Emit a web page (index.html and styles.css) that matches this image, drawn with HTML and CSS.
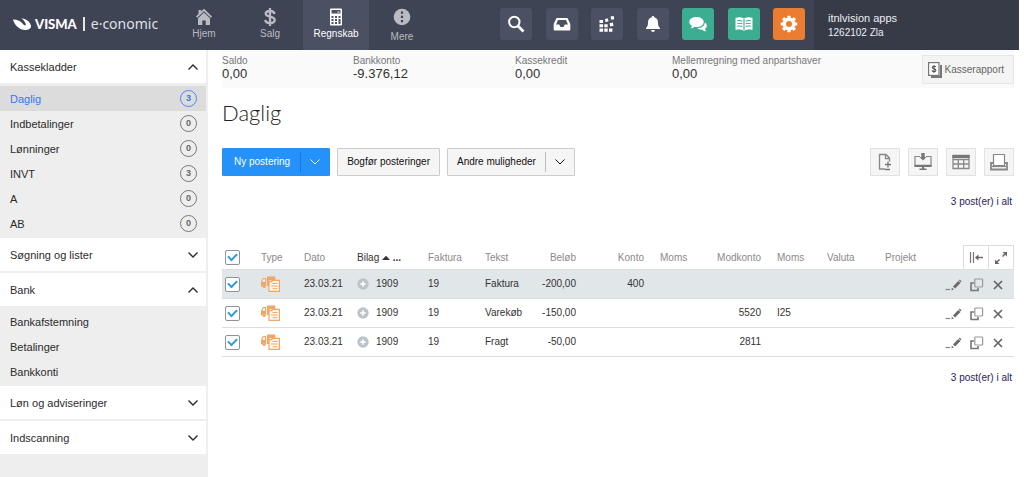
FILE: index.html
```html
<!DOCTYPE html>
<html lang="da">
<head>
<meta charset="utf-8">
<title>Daglig | e·conomic</title>
<link rel="stylesheet" href="styles.css">
</head>
<body>
<svg class="defs" aria-hidden="true">
  <symbol id="chev-down" viewBox="0 0 12 12"><path d="M1.500 3.500 6 8l4.500-4.500" fill="none" stroke="currentColor" stroke-width="1.400"/></symbol>
  <symbol id="chev-up" viewBox="0 0 12 12"><path d="M1.500 8.500 6 4l4.500 4.500" fill="none" stroke="currentColor" stroke-width="1.400"/></symbol>
  <symbol id="truck" viewBox="0 0 20 16">
    <path d="M6 .5h8.300V4H8.500v6H6z M0 6l1.800-4H5.200v8.500H4.800a1.800 1.800 0 0 0-3.400 0H0z" fill="#f0a668"/>
    <path d="M1.300 5.700 2.500 3.200h1.500v2.500z" fill="#fff"/>
    <circle cx="3.100" cy="10.600" r="1.500" fill="#f0a668"/>
    <path d="M8 5.700h3V4.400h7.400v11H8z" fill="#fff8f0" stroke="#f0a668" stroke-width="1.200"/>
    <path d="M11.500 7.500h5M10 10h6.500M11.500 12.700h5" stroke="#f0a668" stroke-width="1"/>
  </symbol>
  <symbol id="plus" viewBox="0 0 12 12"><circle cx="6" cy="6" r="5.700" fill="#bcc4c9"/><path d="M6 3.200v5.600M3.200 6h5.600" stroke="#fff" stroke-width="1.500"/></symbol>
  <symbol id="pencil" viewBox="0 0 16 14"><path d="M0 11.500h4.500" stroke="#888" stroke-width="1.200"/><path d="M6.300 9.600l2 1.800-2.300.8zM7.500 8.400 12.700 3l2.300 2.100L9.600 10.600z" fill="#6a6a6a"/><path d="m13.200 2.600 1.100-1.100L16 3.200l-.9 1.300z" fill="#777"/></symbol>
  <symbol id="copy" viewBox="0 0 14 14"><path d="M4 5H1v7.500h7V10" fill="none" stroke="#777" stroke-width="1.600"/><rect x="4.800" y="1" width="7.800" height="8" rx=".8" fill="none" stroke="#999" stroke-width="1.200"/></symbol>
  <symbol id="cross" viewBox="0 0 12 12"><path d="m2 2 8 8M10 2 2 10" stroke="#666" stroke-width="1.700"/></symbol>
</svg>

<header class="topbar">
  <a class="brand" href="#">
    <svg class="brand-mark" viewBox="0 0 18 12"><path d="M0 1.500C4 1.500 7.500 3 9.500 5.500 11 7.500 12.500 8 12.800 7 13 5 10.500 2 8.500.3 14 1 18 5 18 8.300 18 11 15 12 12 12 7 12 1.500 7.500 0 1.500z" fill="#fff"/></svg>
    <span class="brand-visma">VISMA</span><span class="brand-bar"></span><span class="brand-name">e·conomic</span>
  </a>
  <nav class="tabs">
    <a class="tab" href="#"><svg class="tab-icon" viewBox="0 0 18 18"><path d="M9 .8 17 8.500l-1.200 1.200L9 3.200 2.200 9.700 1 8.500 3.500 6V2h2.600v1.600z" fill="currentColor"/><path d="M3 10.200 9 4.600l6 5.600V17h-4.300v-4.500H7.300V17H3z" fill="currentColor"/></svg>Hjem</a>
    <a class="tab" href="#"><svg class="tab-icon" viewBox="0 0 18 18"><path d="M13.600 6C13.200 4 11.500 3 9 3S4.700 4 4.700 5.800C4.700 9.800 13.700 7.500 13.700 12c0 2-1.800 3-4.600 3s-4.700-1.200-4.900-3.200M9 0v18" fill="none" stroke="currentColor" stroke-width="2.300"/></svg>Salg</a>
    <a class="tab tab-active" href="#"><svg class="tab-icon" viewBox="0 0 18 18"><path fill-rule="evenodd" d="M4 .5h10a1 1 0 0 1 1 1v15a1 1 0 0 1-1 1H4a1 1 0 0 1-1-1v-15a1 1 0 0 1 1-1zM4.500 2v3.500h9V2zM4.500 8v2h2V8zm3.500 0v2h2V8zm3.500 0v2h2V8zM4.500 11v2h2v-2zM8 11v2h2v-2zm3.500 0v5h2v-5zM4.500 14v2h2v-2zM8 14v2h2v-2z" fill="currentColor"/><path d="M10.500 4h2" stroke="currentColor"/></svg>Regnskab</a>
    <a class="tab tab-more" href="#"><svg class="tab-icon" viewBox="0 0 18 18"><circle cx="9" cy="9" r="8.300" fill="currentColor"/><path d="M7.900 3.500h2.200v2.200H7.900zM7.900 7.800h2.200V10H7.900zM7.900 12.100h2.200v2.200H7.900z" fill="#3f4454"/></svg>Mere</a>
  </nav>
  <div class="tools">
    <button class="tool" type="button" aria-label="Søg"><svg viewBox="0 0 18 18"><circle cx="7.300" cy="7" r="5.200" fill="none" stroke="#fff" stroke-width="2"/><path d="m11 11 5.500 5.500" stroke="#fff" stroke-width="2.600"/></svg></button>
    <button class="tool" type="button" aria-label="Indbakke"><svg viewBox="0 0 18 18"><path fill-rule="evenodd" d="M3.500 3h11L17.300 9v5.500a1 1 0 0 1-1 1H1.700a1 1 0 0 1-1-1V9zM5 5 3 9.500h3.200L7.500 12h3l1.300-2.500H15L13 5z" fill="#fff"/></svg></button>
    <button class="tool" type="button" aria-label="Apps"><svg viewBox="0 0 18 18"><path d="M1.500 5h3.600v3H1.500zM1.500 9.300h3.600v3H1.500zM1.500 13.600h3.600v3.200H1.500zM6.300 9.300h3.400v3H6.300zM6.300 13.600h3.400v3.200H6.300zM11 13.600h3.400v3.200H11zM11.600 8.200l3.300-.6.600 3.200-3.300.6zM6.800 4.300l2.800-1 1 2.900-2.900 1zM12.800 1.200H16v3.300h-3.200z" fill="#fff"/></svg></button>
    <button class="tool" type="button" aria-label="Beskeder"><svg viewBox="0 0 18 18"><path d="M9 1c.8 0 1.200.5 1.200 1.200C13 2.700 14 5 14 7.500c0 3.500 1 4.700 2 5.500v1H2v-1c1-.8 2-2 2-5.500C4 5 5 2.700 7.800 2.200 7.800 1.500 8.200 1 9 1zM7 15h4c-.2 1.300-1 2-2 2s-1.800-.7-2-2z" fill="#fff"/></svg></button>
    <button class="tool tool-green" type="button" aria-label="Chat"><svg viewBox="0 0 18 18"><path d="M7.500 2C11.500 2 14.700 4 14.700 7s-3.200 5-7.200 5c-.7 0-1.300 0-2-.2C4.500 12.800 3 13.500 1.500 13.500c.8-.8 1.300-1.700 1.300-2.700C1.200 9.900.3 8.500.3 7 .3 4 3.500 2 7.500 2z" fill="#fff"/><path d="M15.800 7.500c2.700 1.700 2.500 4.700.2 6.200.1 1 .6 1.800 1.500 2.600-1.500.1-2.800-.4-4-1.500-2.200.2-4.200-.5-5.300-1.700 4.500 0 7.500-2.300 7.600-5.600z" fill="#fff"/></svg></button>
    <button class="tool tool-green" type="button" aria-label="Vejledning"><svg viewBox="0 0 18 18"><path d="M.5 3C3.500 2 6.500 2.200 9 3.500 11.500 2.200 14.500 2 17.500 3v12c-3-.8-6-.6-8.500.8C6.500 14.400 3.500 14.200.5 15z" fill="#fff"/><path d="M9 4v11M2.300 5.700c1.700-.4 3.400-.3 5 .3M2.300 8.500c1.700-.4 3.400-.3 5 .3M2.300 11.300c1.700-.4 3.400-.3 5 .3M10.700 6c1.600-.6 3.300-.7 5-.3M10.700 8.800c1.600-.6 3.300-.7 5-.3M10.700 11.600c1.600-.6 3.300-.7 5-.3" fill="none" stroke="#3bad91" stroke-width="1.100"/></svg></button>
    <button class="tool tool-orange" type="button" aria-label="Indstillinger"><svg viewBox="0 0 18 18"><circle cx="9" cy="9" r="4.700" fill="none" stroke="#fff" stroke-width="3.400"/><path d="M9 .7v3M9 14.300v3M.7 9h3M14.300 9h3M3.100 3.100l2 2M12.900 12.900l2 2M14.900 3.100l-2 2M5.100 12.900l-2 2" stroke="#fff" stroke-width="3.200"/></svg></button>
  </div>
  <div class="account"><div class="account-name">itnlvision apps</div><div class="account-id">1262102 Zla</div></div>
</header>

<div class="layout">
  <aside class="sidebar">
    <button class="section" type="button">Kassekladder<svg class="chev"><use href="#chev-up"/></svg></button>
    <ul class="items">
      <li><a class="item item-active" href="#">Daglig<span class="count">3</span></a></li>
      <li><a class="item" href="#">Indbetalinger<span class="count">0</span></a></li>
      <li><a class="item" href="#">Lønninger<span class="count">0</span></a></li>
      <li><a class="item" href="#">INVT<span class="count">3</span></a></li>
      <li><a class="item" href="#">A<span class="count">0</span></a></li>
      <li><a class="item" href="#">AB<span class="count">0</span></a></li>
    </ul>
    <button class="section section-line" type="button">Søgning og lister<svg class="chev"><use href="#chev-down"/></svg></button>
    <button class="section" type="button">Bank<svg class="chev"><use href="#chev-up"/></svg></button>
    <ul class="items">
      <li><a class="item" href="#">Bankafstemning</a></li>
      <li><a class="item" href="#">Betalinger</a></li>
      <li><a class="item" href="#">Bankkonti</a></li>
    </ul>
    <button class="section section-line" type="button">Løn og adviseringer<svg class="chev"><use href="#chev-down"/></svg></button>
    <button class="section" type="button">Indscanning<svg class="chev"><use href="#chev-down"/></svg></button>
  </aside>

  <main class="main">
    <div class="balances">
      <div><div class="bal-label">Saldo</div><div class="bal-value">0,00</div></div>
      <div><div class="bal-label">Bankkonto</div><div class="bal-value">-9.376,12</div></div>
      <div><div class="bal-label">Kassekredit</div><div class="bal-value">0,00</div></div>
      <div><div class="bal-label">Mellemregning med anpartshaver</div><div class="bal-value">0,00</div></div>
      <button class="report" type="button"><svg class="report-icon" viewBox="0 0 14 16"><path d="M3 15h10V3" fill="none" stroke="#777" stroke-width="2"/><rect x=".6" y=".6" width="10.400" height="12.800" fill="#fff" stroke="#777" stroke-width="1.200"/><path d="M7.700 5.200C7.500 4.500 6.800 4.200 5.900 4.200S4.200 4.600 4.200 5.400C4.200 7.200 7.900 6.300 7.900 8.300c0 .9-.8 1.400-1.900 1.400S4.100 9.200 4 8.400M6 3v8" fill="none" stroke="#555" stroke-width="1.100"/></svg>Kasserapport</button>
    </div>

    <h1 class="title">Daglig</h1>

    <div class="actions">
      <div class="split split-primary"><button class="split-main" type="button">Ny postering</button><button class="split-more" type="button" aria-label="Flere posteringer"><svg class="chev-thin" viewBox="0 0 12 12"><path d="M1.500 3.500 6 8l4.500-4.500" fill="none" stroke="currentColor"/></svg></button></div>
      <button class="btn" type="button">Bogfør posteringer</button>
      <div class="split"><button class="split-main" type="button">Andre muligheder</button><button class="split-more" type="button" aria-label="Vis muligheder"><svg class="chev-thin" viewBox="0 0 12 12"><path d="M1.500 3.500 6 8l4.500-4.500" fill="none" stroke="currentColor"/></svg></button></div>
      <div class="outputs">
        <button class="output" type="button" aria-label="Nyt bilag"><svg viewBox="0 0 20 20"><path d="M10 17H4.500V2.500H11L14.500 6v3.500M10.500 2.500v4h4" fill="none" stroke="#888" stroke-width="1.300"/><path d="M13 9.500v6M10 12.500h6M10 17.500h5" stroke="#777" stroke-width="1.300"/></svg></button>
        <button class="output" type="button" aria-label="Hent"><svg viewBox="0 0 20 20"><path d="M7 4.500H2v9.200h16V4.500h-5" fill="none" stroke="#888" stroke-width="1.200"/><path d="M1.500 12.800h17V15h-17z M9 15h2v2H9z M6.500 16.500h7V18h-7z M8.300 1h3.400v4H13.500L10 8.500 6.500 5h1.800z" fill="#777"/></svg></button>
        <button class="output" type="button" aria-label="Kolonner"><svg viewBox="0 0 20 20"><path d="M2 3.500h16v13H2zM2 7.500h16M2 12h16M7.300 7v9.500M12.700 7v9.500" fill="none" stroke="#888" stroke-width="1.300"/><path d="M1.400 3h17.200v3H1.400z" fill="#777"/></svg></button>
        <button class="output" type="button" aria-label="Udskriv"><svg viewBox="0 0 20 20"><path d="M4 11H2v6.500h16V11h-2" fill="none" stroke="#888" stroke-width="1.800"/><path d="M4.500 2.500h11v11h-11z" fill="#fff" stroke="#888" stroke-width="1.200"/><path d="M3 14.500h14" stroke="#888" stroke-width="1.200"/></svg></button>
      </div>
    </div>

    <p class="total">3 post(er) i alt</p>

    <table class="entries">
      <colgroup><col class="w39"><col class="w43"><col class="w53"><col class="w71"><col class="w57"><col class="w55"><col class="w36"><col class="w68"><col class="w66"><col class="w51"><col class="w66"><col class="w58"><col class="w50"><col class="w79"></colgroup>
      <thead>
        <tr>
          <th class="pick"><input class="check" type="checkbox" checked aria-label="Vælg alle"></th>
          <th>Type</th><th>Dato</th><th class="sorted">Bilag <svg class="sort" viewBox="0 0 8 6"><path d="M0 5 4 .8 8 5z" fill="#333"/></svg> <b>...</b></th><th>Faktura</th><th>Tekst</th><th class="num">Beløb</th><th class="num">Konto</th><th class="pad">Moms</th><th class="num">Modkonto</th><th class="pad">Moms</th><th>Valuta</th><th>Projekt</th>
          <th class="view-cell"><div class="views">
            <button class="view" type="button" aria-label="Skjul panel"><svg viewBox="0 0 14 14"><path d="M1.500 1v11M4.500 1v11" stroke="#777" stroke-width="1.200"/><path d="M7 6.500h7" stroke="#666" stroke-width="1.400"/><path d="M6 6.500l3.500-3v6z" fill="#666"/></svg></button>
            <button class="view" type="button" aria-label="Fuld skærm"><svg viewBox="0 0 14 14"><path d="M8.500 5.500 11 3M5.500 8.500 3 11" stroke="#666" stroke-width="1.500"/><path d="M8.500 1H13v4.500zM1 8.500V13h4.500z" fill="#666"/></svg></button>
          </div></th>
        </tr>
      </thead>
      <tbody>
        <tr class="current">
          <td class="pick"><input class="check" type="checkbox" checked aria-label="Vælg Faktura"></td>
          <td><svg class="truck"><use href="#truck"/></svg></td><td>23.03.21</td><td><span class="voucher"><svg class="plus"><use href="#plus"/></svg>1909</span></td><td>19</td><td>Faktura</td><td class="num">-200,00</td><td class="num">400</td><td></td><td></td><td></td><td></td><td></td>
          <td><div class="row-tools"><button class="icon" type="button" aria-label="Rediger"><svg class="pencil"><use href="#pencil"/></svg></button><button class="icon" type="button" aria-label="Kopier"><svg class="copy"><use href="#copy"/></svg></button><button class="icon" type="button" aria-label="Slet"><svg class="cross"><use href="#cross"/></svg></button></div></td>
        </tr>
        <tr>
          <td class="pick"><input class="check" type="checkbox" checked aria-label="Vælg Varekøb"></td>
          <td><svg class="truck"><use href="#truck"/></svg></td><td>23.03.21</td><td><span class="voucher"><svg class="plus"><use href="#plus"/></svg>1909</span></td><td>19</td><td>Varekøb</td><td class="num">-150,00</td><td></td><td></td><td class="num">5520</td><td class="pad">I25</td><td></td><td></td>
          <td><div class="row-tools"><button class="icon" type="button" aria-label="Rediger"><svg class="pencil"><use href="#pencil"/></svg></button><button class="icon" type="button" aria-label="Kopier"><svg class="copy"><use href="#copy"/></svg></button><button class="icon" type="button" aria-label="Slet"><svg class="cross"><use href="#cross"/></svg></button></div></td>
        </tr>
        <tr>
          <td class="pick"><input class="check" type="checkbox" checked aria-label="Vælg Fragt"></td>
          <td><svg class="truck"><use href="#truck"/></svg></td><td>23.03.21</td><td><span class="voucher"><svg class="plus"><use href="#plus"/></svg>1909</span></td><td>19</td><td>Fragt</td><td class="num">-50,00</td><td></td><td></td><td class="num">2811</td><td></td><td></td><td></td>
          <td><div class="row-tools"><button class="icon" type="button" aria-label="Rediger"><svg class="pencil"><use href="#pencil"/></svg></button><button class="icon" type="button" aria-label="Kopier"><svg class="copy"><use href="#copy"/></svg></button><button class="icon" type="button" aria-label="Slet"><svg class="cross"><use href="#cross"/></svg></button></div></td>
        </tr>
      </tbody>
    </table>

    <p class="total total-bottom">3 post(er) i alt</p>
  </main>
</div>
</body>
</html>
```
FILE: styles.css
```css
* { box-sizing: border-box; }
body {
  margin: 0;
  min-height: 100vh;
  display: flex;
  flex-direction: column;
  padding-right: 5px;
  background: #fff;
  color: #333;
  font: 10px/12px "Liberation Sans", Arial, sans-serif;
}
button { font: inherit; color: inherit; margin: 0; padding: 0; border: 0; background: none; cursor: pointer; }
a { color: inherit; text-decoration: none; }
svg { display: block; }
.defs { position: absolute; width: 0; height: 0; }
.chev { width: 12px; height: 12px; }
.chev-thin { width: 12px; height: 12px; }

.topbar { display: flex; height: 50px; background: #3f4454; color: #fff; }
.brand { flex: 0 0 171px; display: flex; align-items: center; padding: 0 0 3px 13px; }
.brand-mark { width: 18px; height: 12px; margin-right: 4px; }
.brand-visma { font: 900 13px/18px Lato, sans-serif; }
.brand-bar { width: 2px; height: 14px; margin: 0 6px 0 6px; background: #e4e5e9; }
.brand-name { font: 400 14px/18px "Noto Sans", sans-serif; color: #dfe1e7; }
.tabs { display: flex; }
.tab { width: 66px; display: flex; flex-direction: column; align-items: center; gap: 2px; padding-top: 8px; color: #b9bbc3; }
.tab-icon { width: 18px; height: 18px; }
.tab-active { background: #4b5063; color: #fff; }
.tab-more { gap: 5px; }
.tools { flex: 0 0 305px; display: flex; justify-content: space-between; align-items: center; margin: 0 9px 2px auto; }
.tool { width: 32px; height: 32px; display: grid; place-items: center; border-radius: 3px; background: #4b5063; }
.tool svg { width: 18px; height: 18px; }
.tool-green { background: #3bad91; }
.tool-orange { background: #eb7d30; }
.account { flex: 0 0 205px; padding: 11px 14px; background: #363b47; color: #eceef2; }
.account-name { font-size: 11px; line-height: 14px; }
.account-id { line-height: 16px; }

.layout { flex: 1; display: flex; }
.sidebar { flex: 0 0 208px; background: #eee; padding-right: 2px; font-size: 11px; color: #2b2b2b; }
.section { width: 100%; height: 33px; display: flex; justify-content: space-between; align-items: center; padding: 0 7px 0 10px; background: #fff; }
.section-line { margin-bottom: 2px; }
.items { list-style: none; margin: 0; padding: 3px 0 2px; }
.item { height: 25px; display: flex; justify-content: space-between; align-items: center; padding: 0 9px 0 10px; }
.item-active { background: #dcdcdc; color: #3478f0; }
.count { width: 17px; height: 17px; border: 1px solid #777; border-radius: 50%; font-size: 9px; line-height: 15px; font-weight: bold; color: #666; text-align: center; }
.item-active .count { border-color: #4a86f0; color: #3478f0; }

.main { flex: 1; min-width: 0; padding: 0 5px 0 14px; }
.balances { display: grid; grid-template-columns: 131px 162px 157px 1fr auto; padding: 5px 0 4px; background: #fafafa; }
.bal-label { color: #777; }
.bal-value { font-size: 13px; line-height: 14px; }
.report { height: 29px; display: flex; align-items: center; gap: 3px; padding: 0 9px 0 5px; border: 1px solid #e6e6e6; background: #f4f4f4; color: #666; }
.report-icon { width: 14px; height: 16px; }
.title { margin: 11px 0 0; font: 300 22px/28px Lato, sans-serif; color: #222; }
.actions { display: flex; gap: 7px; margin-top: 21px; }
.btn, .split { height: 28px; border: 1px solid #ccc; border-radius: 1px; background: #f5f5f5; color: #111; }
.btn { padding: 0 9px; }
.split { display: flex; align-items: center; }
.split-main { padding: 0 9px; height: 20px; border-right: 1px solid #bbb; }
.split-more { width: 28px; height: 26px; display: grid; place-items: center; }
.split-primary { border-color: #2b8fee; background: #2492fa; color: #fff; }
.split-primary .split-main { padding: 0 10px 0 11px; border-color: #1879cf; }
.outputs { display: flex; gap: 8px; margin-left: auto; }
.output { width: 30px; height: 28px; display: grid; place-items: center; border: 1px solid #e2e2e2; background: #f5f5f5; }
.output svg { width: 20px; height: 20px; }
.total { margin: 19px 2px 0; line-height: 14px; color: #2c2057; text-align: right; }

.entries { width: 100%; margin-top: 36px; table-layout: fixed; border-collapse: collapse; }
.w36 { width: 36px; } .w39 { width: 39px; } .w43 { width: 43px; } .w50 { width: 50px; }
.w51 { width: 51px; } .w53 { width: 53px; } .w55 { width: 55px; } .w57 { width: 57px; }
.w58 { width: 58px; } .w66 { width: 66px; } .w68 { width: 68px; } .w71 { width: 71px; } .w79 { width: 79px; }
th, td { padding: 0; text-align: left; white-space: nowrap; }
th { height: 24px; padding-top: 2px; font-weight: normal; color: #8a8a8a; border-bottom: 1px solid #dcdfe0; }
th.pick, th.view-cell { padding-top: 0; }
td { height: 29px; border-bottom: 1px solid #dedede; }
.num { text-align: right; }
.pad { padding-left: 16px; }
.pick { padding-left: 3px; }
.sorted { color: #333; }
.sort { display: inline-block; width: 8px; height: 6px; }
.current { background: #e1e6e8; }
.check { appearance: none; display: grid; place-items: center; width: 15px; height: 15px; margin: 0; border: 1px solid #8d9296; border-radius: 2px; background: #fff; }
.check:checked::after { content: ""; width: 7px; height: 4px; margin-bottom: 2px; border: solid #2d9bdd; border-width: 0 0 2px 2px; transform: rotate(-45deg); }
.truck { width: 20px; height: 16px; }
.voucher { display: flex; align-items: center; gap: 7px; }
.plus { width: 12px; height: 12px; }
.row-tools { display: flex; align-items: center; justify-content: flex-end; gap: 8px; padding: 2px 10px 0 0; }
.pencil { width: 17px; height: 14px; }
.copy { width: 14px; height: 14px; }
.cross { width: 12px; height: 12px; }
.views { display: flex; justify-content: flex-end; }
.view { width: 26px; height: 24px; display: grid; place-items: center; border: 1px solid #ddd; border-bottom: 0; }
.view + .view { border-left: 0; width: 25px; }
.view svg { width: 14px; height: 14px; }
.total-bottom { margin-top: 14px; }
```
